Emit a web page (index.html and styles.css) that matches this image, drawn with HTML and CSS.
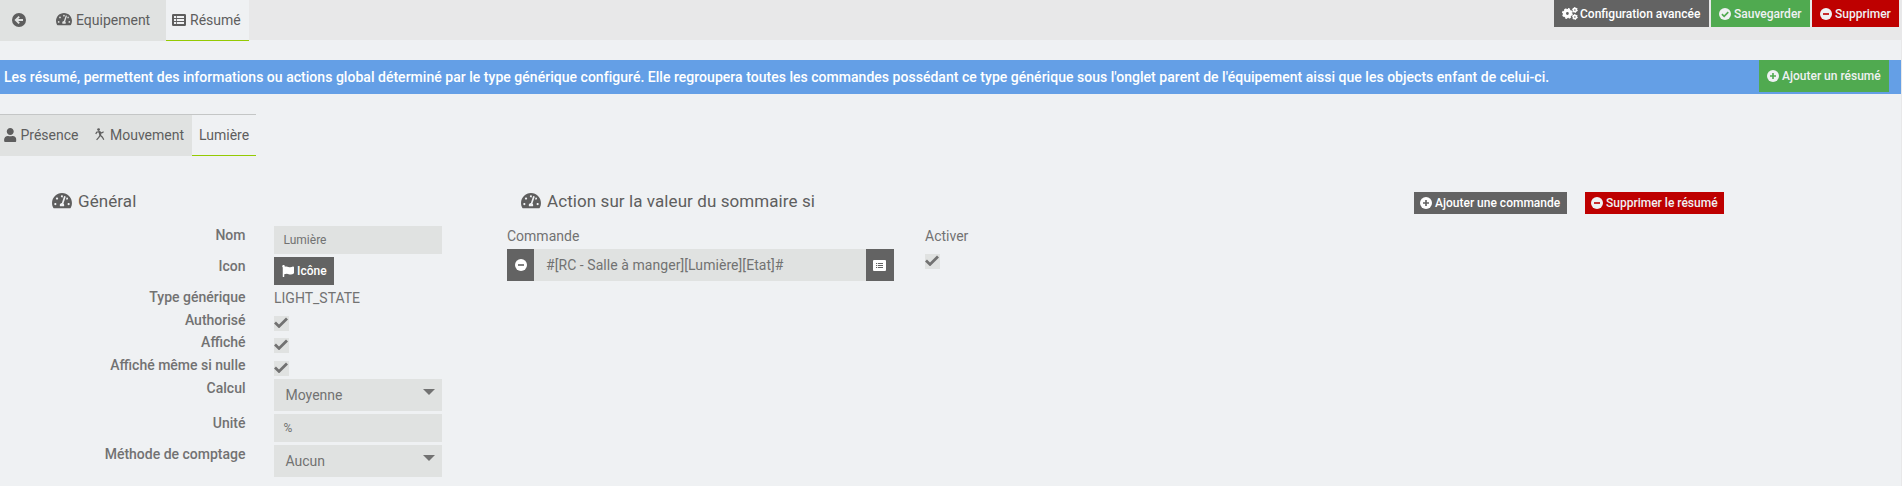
FILE: index.html
```
<!DOCTYPE html>
<html lang="fr">
<head>
<meta charset="utf-8">
<title>Résumé</title>
<link rel="stylesheet" href="styles.css">
</head>
<body>
<svg class="sprite" aria-hidden="true">
  <symbol id="dash" viewBox="0 32 576 448"><path d="M288 32C128.94 32 0 160.94 0 320c0 52.8 14.25 102.26 39.06 144.8 5.61 9.62 16.3 15.2 27.44 15.2h443c11.14 0 21.83-5.58 27.44-15.2C561.75 422.26 576 372.8 576 320c0-159.06-128.94-288-288-288zm0 64c14.71 0 26.58 10.13 30.32 23.65-1.11 2.26-2.64 4.23-3.45 6.67l-9.22 27.67c-5.13 3.49-10.97 6.01-17.64 6.01-17.67 0-32-14.33-32-32S270.33 96 288 96zM96 384c-17.67 0-32-14.33-32-32s14.33-32 32-32 32 14.33 32 32-14.33 32-32 32zm48-160c-17.67 0-32-14.33-32-32s14.33-32 32-32 32 14.33 32 32-14.33 32-32 32zm246.77-72.41l-61.33 184C343.13 347.33 352 364.54 352 384c0 11.72-3.38 22.55-8.88 32H232.88c-5.5-9.45-8.88-20.28-8.88-32 0-33.94 26.5-61.43 59.9-63.59l61.34-184.01c4.17-12.56 17.73-19.45 30.36-15.17 12.57 4.19 19.35 17.79 15.17 30.36zm14.66 57.2l15.52-46.55c3.47-1.29 7.13-2.23 11.05-2.23 17.67 0 32 14.33 32 32s-14.33 32-32 32c-11.38-.01-20.89-6.28-26.57-15.22zM480 384c-17.67 0-32-14.33-32-32s14.33-32 32-32 32 14.33 32 32-14.33 32-32 32z"/></symbol>
  <symbol id="user" viewBox="0 0 448 512"><path d="M224 256c70.7 0 128-57.3 128-128S294.7 0 224 0 96 57.3 96 128s57.3 128 128 128zm89.6 32h-16.7c-22.2 10.2-46.9 16-72.9 16s-50.6-5.8-72.9-16h-16.7C60.2 288 0 348.2 0 422.4V464c0 26.5 21.5 48 48 48h352c26.5 0 48-21.5 48-48v-41.6c0-74.2-60.2-134.4-134.4-134.4z"/></symbol>
  <symbol id="flag" viewBox="0 0 512 512"><path d="M349.565 98.783C295.978 98.783 251.721 64 184.348 64c-24.955 0-47.309 4.384-68.045 12.013a55.947 55.947 0 0 0 3.586-23.562C118.117 24.015 94.806 1.206 66.338.048 34.345-1.254 8 24.296 8 56c0 19.026 9.497 35.825 24 45.945V488c0 13.255 10.745 24 24 24h16c13.255 0 24-10.745 24-24v-94.4c28.311-12.064 63.582-22.122 114.435-22.122 53.588 0 97.844 34.783 165.217 34.783 48.169 0 86.667-16.294 122.505-40.858C506.84 359.452 512 349.571 512 339.045v-243.1c0-23.393-24.269-38.87-45.485-29.016-34.338 15.948-76.454 31.854-116.95 31.854z"/></symbol>
  <symbol id="list" viewBox="0 0 14 12"><path fill-rule="evenodd" d="M1.3 0h11.4q1.3 0 1.3 1.3v9.4q0 1.3-1.3 1.3H1.3Q0 12 0 10.7V1.3Q0 0 1.3 0zM2 2v2h2.2V2zM5 2v2h7V2zM2 5v2h2.2V5zM5 5v2h7V5zM2 8v2h2.2V8zM5 8v2h7V8z"/></symbol>
  <symbol id="listdots" viewBox="0 0 13 11"><path fill-rule="evenodd" d="M1 0h11q1 0 1 1v9q0 1-1 1H1q-1 0-1-1V1q0-1 1-1zM3 3v1h1.2V3zM5 3v1h5V3zM3 5v1h1.2V5zM5 5v1h5V5zM3 7v1h1.2V7zM5 7v1h5V7z"/></symbol>
  <symbol id="back" viewBox="0 0 14 14"><circle cx="7" cy="7" r="7"/><path class="cut" d="M11 7H4M7.2 3.6 3.8 7l3.4 3.4"/></symbol>
  <symbol id="plus" viewBox="0 0 14 14"><circle cx="7" cy="7" r="7"/><path class="cut" d="M3.5 7h7M7 3.5v7"/></symbol>
  <symbol id="minus" viewBox="0 0 14 14"><circle cx="7" cy="7" r="7"/><path class="cut" d="M3.5 7h7"/></symbol>
  <symbol id="ok" viewBox="0 0 14 14"><circle cx="7" cy="7" r="7"/><path class="cut" d="M3.4 7.2 6 9.8l4.8-5"/></symbol>
  <symbol id="check" viewBox="0 0 14 11"><path class="tick" d="M1 5.6 5 9.4 13 1.4"/></symbol>
  <symbol id="walk" viewBox="0 0 10 13"><circle cx="3.6" cy="1.6" r="1.4"/><path class="limb heavy" d="M4.4 3.4 5.4 7.4"/><path class="limb" d="M.8 6 1.6 4.2 4.2 3.6 6.6 5 8.6 3.8M5.2 7.2 3.8 9.4 1.6 11.8M5.2 7.2l2.2 2 1.4 2.6"/></symbol>
  <symbol id="cogs" viewBox="0 0 16 13"><circle class="gear" cx="5.4" cy="6.5" r="3"/><circle class="teeth" cx="5.4" cy="6.5" r="4.7"/><circle class="gear2" cx="12.9" cy="3" r="1.6"/><circle class="teeth2" cx="12.9" cy="3" r="2.5"/><circle class="gear2" cx="12.9" cy="10" r="1.6"/><circle class="teeth2" cx="12.9" cy="10" r="2.5"/></symbol>
</svg>

<header class="topbar">
  <nav class="tabs">
    <a class="tab tab-back"><svg class="i14"><use href="#back"/></svg></a>
    <a class="tab tab-equip"><svg class="i-dash"><use href="#dash"/></svg><span>Equipement</span></a>
    <a class="tab tab-resume active"><svg class="i-list"><use href="#list"/></svg><span>Résumé</span></a>
  </nav>
  <div class="actions">
    <a class="btn gray w-config"><svg class="i-cogs"><use href="#cogs"/></svg><span>Configuration avancée</span></a>
    <a class="btn green w-save"><svg class="i12"><use href="#ok"/></svg><span>Sauvegarder</span></a>
    <a class="btn red w-del"><svg class="i12"><use href="#minus"/></svg><span>Supprimer</span></a>
  </div>
</header>

<main class="page">
  <div class="alert">
    <span class="alert-text">Les résumé, permettent des informations ou actions global déterminé par le type générique configuré. Elle regroupera toutes les commandes possédant ce type générique sous l'onglet parent de l'équipement aissi que les objects enfant de celui-ci.</span>
    <a class="btn green w-add"><svg class="i12"><use href="#plus"/></svg><span>Ajouter un résumé</span></a>
  </div>

  <nav class="subtabs">
    <a class="tab sub-presence"><svg class="i-user"><use href="#user"/></svg><span>Présence</span></a>
    <a class="tab sub-move"><svg class="i-walk"><use href="#walk"/></svg><span>Mouvement</span></a>
    <a class="tab sub-light active"><span>Lumière</span></a>
  </nav>

  <div class="columns">
    <section class="general">
      <h3 class="title"><svg class="i-title"><use href="#dash"/></svg><span>Général</span></h3>
      <form class="form">
        <label>Nom</label><div class="input">Lumière</div>
        <label>Icon</label><a class="btn gray w-icon"><svg class="i12"><use href="#flag"/></svg><span>Icône</span></a>
        <label>Type générique</label><span class="value">LIGHT_STATE</span>
        <label>Authorisé</label><span class="checkbox"><svg><use href="#check"/></svg></span>
        <label>Affiché</label><span class="checkbox"><svg><use href="#check"/></svg></span>
        <label>Affiché même si nulle</label><span class="checkbox"><svg><use href="#check"/></svg></span>
        <label>Calcul</label><div class="select">Moyenne<i class="caret"></i></div>
        <label>Unité</label><div class="input">%</div>
        <label>Méthode de comptage</label><div class="select">Aucun<i class="caret"></i></div>
      </form>
    </section>

    <section class="command">
      <h3 class="title"><svg class="i-title"><use href="#dash"/></svg><span>Action sur la valeur du sommaire si</span></h3>
      <div class="cmd-grid">
        <span class="th">Commande</span><span class="th">Activer</span>
        <div class="group">
          <a class="addon"><svg class="i12"><use href="#minus"/></svg></a>
          <div class="group-input">#[RC - Salle à manger][Lumière][Etat]#</div>
          <a class="addon addon-list"><svg class="i-dots"><use href="#listdots"/></svg></a>
        </div>
        <span class="checkbox cmd-check"><svg><use href="#check"/></svg></span>
      </div>
    </section>

    <div class="side-actions">
      <a class="btn gray w-cmd"><svg class="i12"><use href="#plus"/></svg><span>Ajouter une commande</span></a>
      <a class="btn red w-rm"><svg class="i12"><use href="#minus"/></svg><span>Supprimer le résumé</span></a>
    </div>
  </div>
</main>
</body>
</html>
```
FILE: styles.css
```
* { box-sizing: border-box; }
body {
  margin: 0;
  height: 486px;
  overflow: hidden;
  background: #eff1f3;
  color: #727272;
  font: 400 14px/20px Roboto, sans-serif;
}
.sprite { position: absolute; width: 0; height: 0; }
svg { display: block; flex: none; fill: currentColor; }
span { white-space: nowrap; }

.cut { fill: none; stroke: var(--bg, #e0e2e1); stroke-width: 1.9; }
.tick { fill: none; stroke: currentColor; stroke-width: 2.8; }
.limb { fill: none; stroke: currentColor; stroke-width: 1.2; }
.heavy { stroke-width: 2; }
.gear { fill: none; stroke: currentColor; stroke-width: 3.2; }
.teeth { fill: none; stroke: currentColor; stroke-width: 1.5; stroke-dasharray: 2.1 1.59; }
.gear2 { fill: none; stroke: currentColor; stroke-width: 1.6; }
.teeth2 { fill: none; stroke: currentColor; stroke-width: 1; stroke-dasharray: 1.3 1.32; }

.i12 { width: 12px; height: 12px; }
.i14 { width: 14px; height: 14px; }
.i-dash { width: 16px; height: 12.5px; }
.i-list { width: 14px; height: 12px; }
.i-dots { width: 13px; height: 11px; }
.i-user { width: 12.5px; height: 14px; }
.i-walk { width: 10px; height: 13px; }
.i-cogs { width: 16px; height: 13px; }
.i-title { width: 20px; height: 15.5px; }

.topbar {
  display: flex;
  justify-content: space-between;
  height: 40px;
  background: #e8e8e9;
}
.tabs, .subtabs { display: flex; align-items: flex-start; }
.tab {
  display: flex;
  align-items: center;
  gap: 4px;
  height: 41px;
  padding-bottom: 2px;
  background: #e0e2e1;
  color: #5e5e5e;
}
.tab.active { padding-bottom: 1px; background: #eff1f3; border-bottom: 1px solid #94ca02; }
.tab-back { width: 46px; padding-left: 12px; --bg: #e0e2e1; }
.tab-equip { width: 120px; padding-left: 10px; }
.tab-resume { width: 83px; padding-left: 6px; }

.actions { display: flex; gap: 2px; padding-right: 3px; }
.btn {
  display: flex;
  align-items: center;
  gap: 3px;
  height: 27px;
  padding-left: 8px;
  color: #fff;
  font-size: 12px;
  font-weight: 500;
}
.gray { background: #636363; --bg: #636363; }
.green { background: #50aa50; --bg: #50aa50; color: #eff1f3; }
.red { background: #be0000; --bg: #be0000; color: #eff1f3; }
.w-config { width: 155px; gap: 2px; }
.w-save { width: 99px; }
.w-del { width: 87px; }

.page { padding-top: 20px; height: 446px; border-right: 1px solid #e8e8e9; }
.alert {
  display: flex;
  justify-content: space-between;
  height: 34px;
  padding: 0 12px 0 4px;
  background: #649fe6;
  color: #fff;
  font-weight: 500;
}
.alert-text { line-height: 34px; letter-spacing: 0.027px; }
.w-add { width: 130px; height: 32px; }

.subtabs { padding-top: 20px; }
.subtabs .tab { height: 42px; border-top: 1px solid #c4c6c6; }
.sub-presence { width: 85px; padding-left: 4px; }
.sub-move { width: 107px; padding-left: 10px; gap: 5px; }
.sub-light { width: 64px; padding-left: 7px; }

.columns { display: flex; }
.general { width: 507px; padding-top: 33px; }
.command { width: 907px; padding-top: 33px; }
.title {
  display: flex;
  align-items: center;
  gap: 6px;
  height: 24px;
  margin: 0 0 13px;
  padding-left: 52px;
  color: #5e5e5e;
  font-size: 17px;
  font-weight: 400;
  letter-spacing: 0.08px;
}
.command .title { padding-left: 14px; }
.form {
  display: grid;
  grid-template-columns: 245.5px 168px;
  grid-template-rows: 31px 31px 23px 22px 23px 23px 35px 31px 32px;
  column-gap: 28.5px;
}
.form label { text-align: right; font-weight: 500; line-height: 19px; }
.input {
  height: 28px;
  padding-left: 9.5px;
  background: #e0e2e1;
  font-size: 12px;
  line-height: 29px;
}
.select {
  display: flex;
  justify-content: space-between;
  height: 32px;
  padding: 0 7px 0 11.5px;
  background: #e0e2e1;
  line-height: 32px;
}
.caret {
  width: 12px;
  height: 6px;
  margin-top: 10px;
  background: #727272;
  clip-path: polygon(0 0, 100% 0, 50% 100%);
}
.w-icon { width: 60px; height: 28px; }
.value { line-height: 21px; }
.checkbox {
  display: block;
  width: 15px;
  height: 15px;
  margin-top: 5px;
  padding-top: 1px;
  background: #e0e2e1;
}
.checkbox svg { width: 14px; height: 11px; }

.cmd-grid {
  display: grid;
  grid-template-columns: 387px 100px;
  grid-template-rows: 23px 32px;
  column-gap: 31px;
}
.th { line-height: 21px; }
.group { display: flex; }
.group-input { letter-spacing: 0.06px; }
.addon {
  display: flex;
  align-items: center;
  justify-content: center;
  width: 27px;
  background: #636363;
  color: #fff;
  --bg: #636363;
}
.addon-list { width: 28px; padding-right: 1px; }
.group-input { width: 332px; padding-left: 12px; background: #e0e2e1; line-height: 32px; }

.side-actions { display: flex; gap: 18px; padding-top: 36px; }
.side-actions .btn { height: 22px; padding-left: 6px; }
.w-cmd { width: 153px; }
.w-rm { width: 139px; }
```
